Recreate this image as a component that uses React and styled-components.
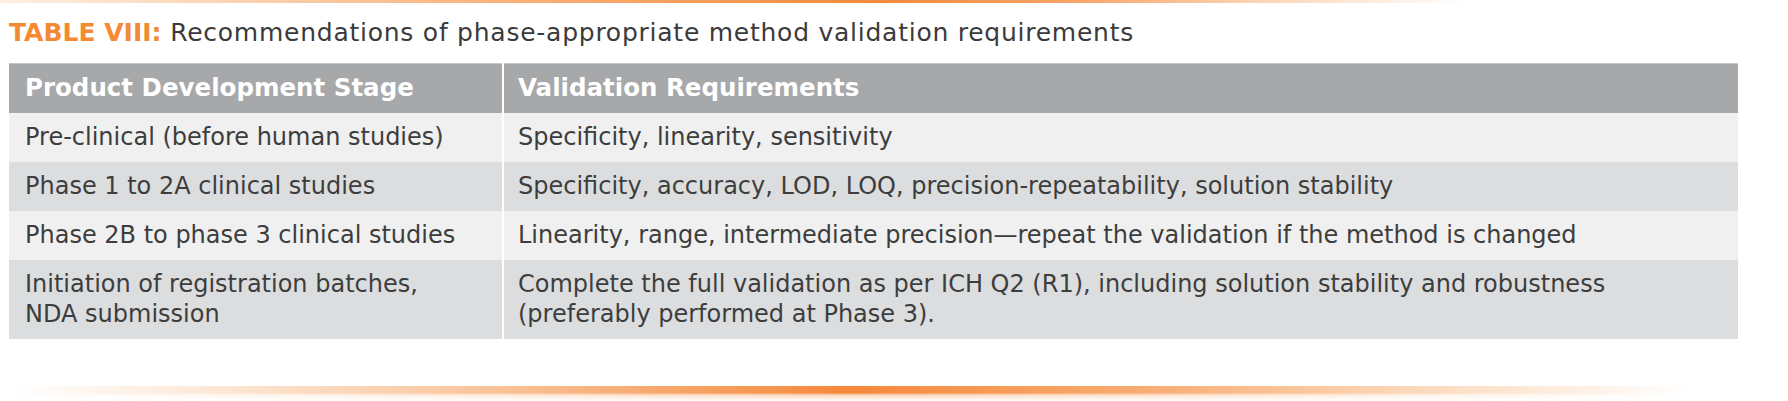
import React from "react";
import styled, { createGlobalStyle } from "styled-components";

const Global = createGlobalStyle`
  html, body { margin: 0; padding: 0; background: #ffffff; }
  body { font-family: "DejaVu Sans", "Liberation Sans", sans-serif; }
`;

const Page = styled.div`
  width: 1788px;
  height: 401px;
  display: flex;
  flex-direction: column;
  background: #ffffff;
  overflow: hidden;
`;

const TopRule = styled.div`
  height: 3px;
  width: 100%;
  background: linear-gradient(
    90deg,
    #fdf0e4 0%,
    #f9b885 25%,
    #f5893a 49%,
    #f7a468 60%,
    #fbd3b2 70%,
    rgba(255, 255, 255, 0) 82%
  );
`;

const Content = styled.div`
  display: flex;
  flex-direction: column;
  padding: 0 50px 0 9px;
`;

const Title = styled.h1`
  margin: 16px 0 0 0;
  font-size: 25px;
  line-height: 28px;
  font-weight: 400;
  color: #3b3b3b;
  letter-spacing: 0.75px;
  white-space: nowrap;
`;

const Label = styled.span`
  color: #f58a35;
  font-weight: 700;
  letter-spacing: 0;
`;

const Table = styled.div`
  margin-top: 16px;
  display: flex;
  flex-direction: column;
  width: 1729px;
`;

const Row = styled.div`
  display: grid;
  grid-template-columns: 493px 1fr;
  column-gap: 2px;
  background: #ffffff;
`;

const HeadCell = styled.div`
  background: #a7a8aa;
  border-top: 1px solid #c4c5c7;
  padding: 10px 0 11px ${(p) => p.$pad}px;
  font-size: 24.5px;
  line-height: 28px;
  font-weight: 700;
  color: #ffffff;
  white-space: nowrap;
`;

const Cell = styled.div`
  background: ${(p) => (p.$shade ? "#dcdddf" : "#eff0ef")};
  padding: 9px 0 10px ${(p) => p.$pad}px;
  font-size: 24px;
  line-height: 30px;
  color: #3d3d3d;
  white-space: nowrap;
`;

const BottomGlow = styled.div`
  margin: 47px 50px 0 0;
  height: 15px;
  background: linear-gradient(
    90deg,
    rgba(255, 255, 255, 0) 0%,
    #fde8d6 12%,
    #f9c094 30%,
    #f5883a 50%,
    #f8ad74 68%,
    #fcdcc0 85%,
    rgba(255, 255, 255, 0) 100%
  );
  -webkit-mask-image: linear-gradient(
    to bottom,
    #000 0%,
    #000 45%,
    rgba(0, 0, 0, 0.35) 60%,
    rgba(0, 0, 0, 0) 100%
  );
  mask-image: linear-gradient(
    to bottom,
    #000 0%,
    #000 45%,
    rgba(0, 0, 0, 0.35) 60%,
    rgba(0, 0, 0, 0) 100%
  );
`;

const rows = [
  ["Pre-clinical (before human studies)", "Specificity, linearity, sensitivity"],
  [
    "Phase 1 to 2A clinical studies",
    "Specificity, accuracy, LOD, LOQ, precision-repeatability, solution stability",
  ],
  [
    "Phase 2B to phase 3 clinical studies",
    "Linearity, range, intermediate precision\u2014repeat the validation if the method is changed",
  ],
  [
    ["Initiation of registration batches,", "NDA submission"],
    [
      "Complete the full validation as per ICH Q2 (R1), including solution stability and robustness",
      "(preferably performed at Phase 3).",
    ],
  ],
];

const Lines = ({ value }) =>
  Array.isArray(value)
    ? value.map((l, i) => (
        <React.Fragment key={i}>
          {i > 0 && <br />}
          {l}
        </React.Fragment>
      ))
    : value;

export default function App() {
  return (
    <>
      <Global />
      <Page>
        <TopRule />
        <Content>
          <Title>
            <Label>TABLE VIII:</Label> Recommendations of phase-appropriate method validation requirements
          </Title>
          <Table>
            <Row>
              <HeadCell $pad={16}>Product Development Stage</HeadCell>
              <HeadCell $pad={14}>Validation Requirements</HeadCell>
            </Row>
            {rows.map(([a, b], i) => (
              <Row key={i}>
                <Cell $shade={i % 2 === 1} $pad={16}>
                  <Lines value={a} />
                </Cell>
                <Cell $shade={i % 2 === 1} $pad={14}>
                  <Lines value={b} />
                </Cell>
              </Row>
            ))}
          </Table>
          <BottomGlow />
        </Content>
      </Page>
    </>
  );
}
